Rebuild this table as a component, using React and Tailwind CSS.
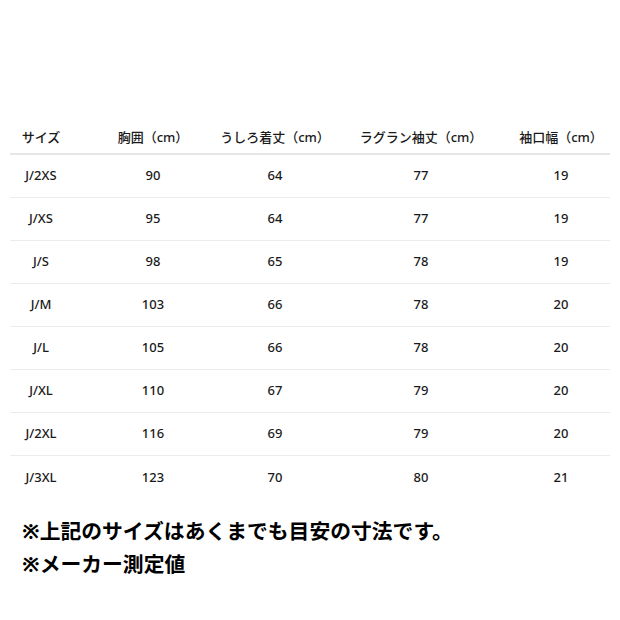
import React from "react";

const headers = ["サイズ", "胸囲（cm）", "うしろ着丈（cm）", "ラグラン袖丈（cm）", "袖口幅（cm）"];

const rows = [
  ["J/2XS", "90", "64", "77", "19"],
  ["J/XS", "95", "64", "77", "19"],
  ["J/S", "98", "65", "78", "19"],
  ["J/M", "103", "66", "78", "20"],
  ["J/L", "105", "66", "78", "20"],
  ["J/XL", "110", "67", "79", "20"],
  ["J/2XL", "116", "69", "79", "20"],
  ["J/3XL", "123", "70", "80", "21"],
];

const grid = "grid grid-cols-[62px_162px_82px_210px_70px_1fr]";

export default function App() {
  return (
    <div
      className="w-[620px] h-[620px] bg-white pt-[124px] px-[10px] text-[#1a1a1a]"
      style={{ fontFamily: '"Noto Sans", "Noto Sans CJK JP", sans-serif' }}
    >
      {/* size table */}
      <div className="w-[600px]">
        <div className={`${grid} h-[31px] border-b-2 border-[#e6e6e6] text-[13px] font-medium`}>
          {headers.map((h) => (
            <div key={h} className="flex justify-center items-center whitespace-nowrap pb-[1px]">
              {h}
            </div>
          ))}
        </div>
        {rows.map((r, i) => (
          <div
            key={r[0]}
            className={`${grid} h-[43px] text-[13px] font-medium ${i < rows.length - 1 ? "border-b border-[#ececec]" : ""}`}
          >
            {r.map((c, j) => (
              <div key={j} className="flex justify-center items-center whitespace-nowrap">
                {c}
              </div>
            ))}
          </div>
        ))}
      </div>

      <div className="mt-[16px] pl-[12px] text-[20.8px] leading-[33px] font-bold text-black">
        <p>※上記のサイズはあくまでも目安の寸法です。</p>
        <p>※メーカー測定値</p>
      </div>
    </div>
  );
}
